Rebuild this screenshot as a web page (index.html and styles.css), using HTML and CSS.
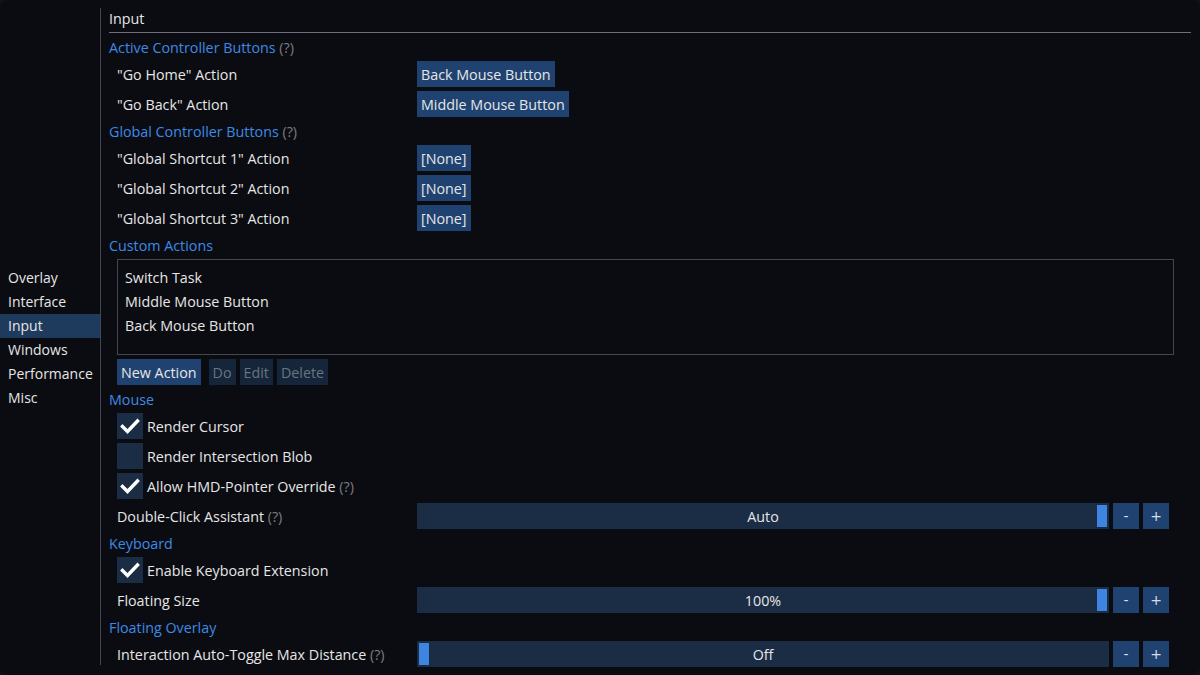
FILE: index.html
```html
<!DOCTYPE html>
<html>
<head>
<meta charset="utf-8">
<link rel="stylesheet" href="styles.css">
</head>
<body>
<div class="window">
  <nav class="sidebar">
    <div class="nav-item">Overlay</div>
    <div class="nav-item">Interface</div>
    <div class="nav-item active">Input</div>
    <div class="nav-item">Windows</div>
    <div class="nav-item">Performance</div>
    <div class="nav-item">Misc</div>
  </nav>
  <main class="main">
    <div class="title">Input</div>
    <div class="content">
      <div class="section">Active Controller Buttons <span class="help">(?)</span></div>
      <div class="row"><div class="label">"Go Home" Action</div><button class="btn">Back Mouse Button</button></div>
      <div class="row"><div class="label">"Go Back" Action</div><button class="btn">Middle Mouse Button</button></div>

      <div class="section">Global Controller Buttons <span class="help">(?)</span></div>
      <div class="row"><div class="label">"Global Shortcut 1" Action</div><button class="btn">[None]</button></div>
      <div class="row"><div class="label">"Global Shortcut 2" Action</div><button class="btn">[None]</button></div>
      <div class="row"><div class="label">"Global Shortcut 3" Action</div><button class="btn">[None]</button></div>

      <div class="section">Custom Actions</div>
      <div class="listbox">
        <div class="list-item">Switch Task</div>
        <div class="list-item">Middle Mouse Button</div>
        <div class="list-item">Back Mouse Button</div>
      </div>
      <div class="actions">
        <button class="btn">New Action</button>
        <div class="action-group">
          <button class="btn disabled">Do</button>
          <button class="btn disabled">Edit</button>
          <button class="btn disabled">Delete</button>
        </div>
      </div>

      <div class="section section-tight">Mouse</div>
      <div class="row"><span class="checkbox checked"><svg viewBox="0 0 26 26" width="26" height="26"><polyline points="5.5,13.5 10.5,18.5 20.5,8" fill="none" stroke="#ffffff" stroke-width="3.4" stroke-linecap="square"/></svg></span><span class="check-label">Render Cursor</span></div>
      <div class="row"><span class="checkbox"></span><span class="check-label">Render Intersection Blob</span></div>
      <div class="row"><span class="checkbox checked"><svg viewBox="0 0 26 26" width="26" height="26"><polyline points="5.5,13.5 10.5,18.5 20.5,8" fill="none" stroke="#ffffff" stroke-width="3.4" stroke-linecap="square"/></svg></span><span class="check-label">Allow HMD-Pointer Override <span class="help">(?)</span></span></div>
      <div class="row">
        <div class="label">Double-Click Assistant <span class="help">(?)</span></div>
        <div class="slider"><span class="grab grab-end"></span><span class="slider-text">Auto</span></div>
        <button class="step">-</button><button class="step">+</button>
      </div>

      <div class="section">Keyboard</div>
      <div class="row"><span class="checkbox checked"><svg viewBox="0 0 26 26" width="26" height="26"><polyline points="5.5,13.5 10.5,18.5 20.5,8" fill="none" stroke="#ffffff" stroke-width="3.4" stroke-linecap="square"/></svg></span><span class="check-label">Enable Keyboard Extension</span></div>
      <div class="row">
        <div class="label">Floating Size</div>
        <div class="slider"><span class="grab grab-end"></span><span class="slider-text">100%</span></div>
        <button class="step">-</button><button class="step">+</button>
      </div>

      <div class="section">Floating Overlay</div>
      <div class="row">
        <div class="label">Interaction Auto-Toggle Max Distance <span class="help">(?)</span></div>
        <div class="slider"><span class="grab grab-start"></span><span class="slider-text">Off</span></div>
        <button class="step">-</button><button class="step">+</button>
      </div>
    </div>
  </main>
</div>
</body>
</html>
```

FILE: styles.css
```css
html, body {
  margin: 0;
  padding: 0;
  background: #101216;
}
body {
  font-family: "Open Sans", "Noto Sans", sans-serif;
  font-size: 14.3px;
  color: #e6e6e6;
}
.window {
  width: 1200px;
  height: 675px;
  background: #0b0c11;
  border-radius: 8px;
  display: flex;
  overflow: hidden;
}
.sidebar {
  width: 100px;
  flex: none;
  display: flex;
  flex-direction: column;
  justify-content: center;
  font-size: 14px;
}
.nav-item {
  height: 24px;
  line-height: 24px;
  padding-left: 8px;
  white-space: nowrap;
}
.nav-item.active {
  background: #1e3a5c;
}
.main {
  flex: 1;
  margin: 8px 0 10px 0;
  border-left: 1px solid #45464f;
  padding: 0 9px 0 8px;
  display: flex;
  flex-direction: column;
}
.title {
  height: 24px;
  line-height: 22px;
  border-bottom: 1px solid #6e6e80;
  flex: none;
}
.content {
  padding-top: 3px;
  padding-right: 17px;
  padding-left: 8px;
  display: flex;
  flex-direction: column;
}
.section {
  height: 24px;
  line-height: 24px;
  color: #3d8ae6;
  margin-left: -8px;
}
.section-tight {
  margin-top: 3px;
}
.help {
  color: #7c7c82;
}
.row {
  height: 30px;
  padding-top: 1px;
  box-sizing: border-box;
  display: flex;
  align-items: flex-start;
}
.label {
  width: 300px;
  flex: none;
  height: 26px;
  line-height: 28px;
  white-space: nowrap;
}
.btn {
  font: inherit;
  color: #e6e6e6;
  background: #1f4270;
  border: none;
  height: 26px;
  line-height: 28px;
  padding: 0 4px;
  margin: 0;
  white-space: nowrap;
  overflow: hidden;
}
.btn.disabled {
  background: #15253a;
  color: #6a7480;
}
.listbox {
  margin-top: 1px;
  height: 96px;
  box-sizing: border-box;
  border: 1px solid #45464f;
  padding: 6px 0 0 7px;
}
.list-item {
  height: 24px;
  line-height: 24px;
}
.actions {
  margin-top: 4px;
  display: flex;
  gap: 8px;
  height: 26px;
}
.action-group {
  display: flex;
  gap: 4px;
}
.checkbox {
  width: 26px;
  height: 26px;
  background: #1b2c45;
  flex: none;
  display: block;
}
.checkbox svg {
  display: block;
}
.check-label {
  margin-left: 4px;
  height: 26px;
  line-height: 28px;
  white-space: nowrap;
}
.slider {
  position: relative;
  width: 692px;
  height: 26px;
  background: #1b2c45;
  flex: none;
  display: flex;
  justify-content: center;
  align-items: flex-start;
}
.slider-text {
  position: relative;
  line-height: 28px;
}
.grab {
  position: absolute;
  top: 2px;
  width: 10px;
  height: 22px;
  background: #3d85e0;
}
.grab-end {
  right: 2px;
}
.grab-start {
  left: 2px;
}
.step {
  font-family: "DejaVu Sans", sans-serif;
  font-size: 14px;
  color: #d8dce4;
  background: #1f4270;
  border: none;
  width: 26px;
  height: 26px;
  margin: 0 0 0 4px;
  padding: 0;
  line-height: 26px;
}
```
